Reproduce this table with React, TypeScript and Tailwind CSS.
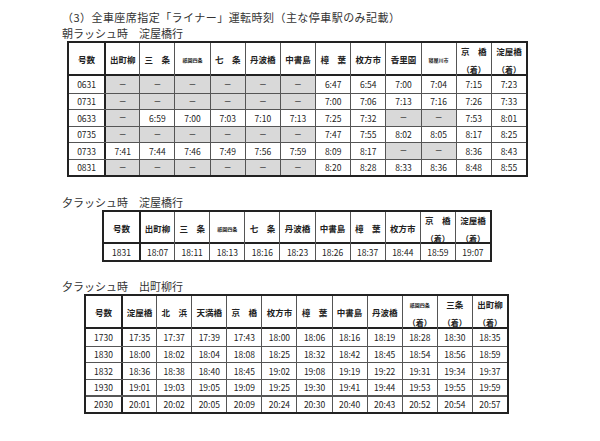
import React from "react";

type H = { t: string; tiny?: boolean; arr?: boolean };

const h = (t: string, tiny = false, arr = false): H => ({ t, tiny, arr });

function HeaderCell({ hd, idx }: { hd: H; idx: number }) {
  const border =
    idx === 0 ? "" : idx === 1 ? "border-l-2 border-[#222]" : "border-l border-[#555]";
  return (
    <div
      className={`${border} flex flex-col items-center h-full ${
        hd.arr ? "justify-start pt-[2px] gap-[5px]" : "justify-center"
      }`}
    >
      <span
        className={
          hd.tiny
            ? "text-[5px] leading-[13px] font-bold whitespace-nowrap"
            : "text-[8.5px] leading-[13px] font-bold whitespace-nowrap"
        }
      >
        {hd.t}
      </span>
      {hd.arr && <span className="text-[8px] leading-[13px] font-bold">（着）</span>}
    </div>
  );
}

function DataCell({ v, idx }: { v: string; idx: number }) {
  const border =
    idx === 0 ? "" : idx === 1 ? "border-l-2 border-[#222]" : "border-l border-[#555]";
  const dash = v === "—";
  return (
    <div
      className={`${border} flex items-center justify-center h-full ${
        dash ? "bg-[#d9d9d9]" : "bg-white"
      }`}
    >
      <span className={dash ? "text-[7px] leading-none font-bold text-[#333]" : "text-[8.5px] leading-none"}>
        {v}
      </span>
    </div>
  );
}

function TimeTable({
  width,
  grid,
  headers,
  rows,
  headerH,
  rowH,
  lastThick,
}: {
  width: string;
  grid: string;
  headers: H[];
  rows: string[][];
  headerH: string;
  rowH: string;
  lastThick?: boolean;
}) {
  return (
    <div className={`${width} border-2 border-[#222] bg-white text-[#222]`}>
      <div className={`grid ${grid} ${headerH} border-b-2 border-[#222]`}>
        {headers.map((hd, i) => (
          <HeaderCell key={i} hd={hd} idx={i} />
        ))}
      </div>
      {rows.map((r, ri) => (
        <div
          key={ri}
          className={`grid ${grid} ${rowH} ${
            ri === 0
              ? ""
              : lastThick && ri === rows.length - 1
              ? "border-t-2 border-[#555]"
              : "border-t border-[#555]"
          }`}
        >
          {r.map((v, i) => (
            <DataCell key={i} v={v} idx={i} />
          ))}
        </div>
      ))}
    </div>
  );
}

const D = "—";

const t1Headers: H[] = [
  h("号数"),
  h("出町柳"),
  h("三　条"),
  h("祇園四条", true),
  h("七　条"),
  h("丹波橋"),
  h("中書島"),
  h("樟　葉"),
  h("枚方市"),
  h("香里園"),
  h("寝屋川市", true),
  h("京　橋", false, true),
  h("淀屋橋", false, true),
];

const t1Rows: string[][] = [
  ["0631", D, D, D, D, D, D, "6:47", "6:54", "7:00", "7:04", "7:15", "7:23"],
  ["0731", D, D, D, D, D, D, "7:00", "7:06", "7:13", "7:16", "7:26", "7:33"],
  ["0633", D, "6:59", "7:00", "7:03", "7:10", "7:13", "7:25", "7:32", D, D, "7:53", "8:01"],
  ["0735", D, D, D, D, D, D, "7:47", "7:55", "8:02", "8:05", "8:17", "8:25"],
  ["0733", "7:41", "7:44", "7:46", "7:49", "7:56", "7:59", "8:09", "8:17", D, D, "8:36", "8:43"],
  ["0831", D, D, D, D, D, D, "8:20", "8:28", "8:33", "8:36", "8:48", "8:55"],
];

const t2Headers: H[] = [
  h("号数"),
  h("出町柳"),
  h("三　条"),
  h("祇園四条", true),
  h("七　条"),
  h("丹波橋"),
  h("中書島"),
  h("樟　葉"),
  h("枚方市"),
  h("京　橋", false, true),
  h("淀屋橋", false, true),
];

const t2Rows: string[][] = [
  ["1831", "18:07", "18:11", "18:13", "18:16", "18:23", "18:26", "18:37", "18:44", "18:59", "19:07"],
];

const t3Headers: H[] = [
  h("号数"),
  h("淀屋橋"),
  h("北　浜"),
  h("天満橋"),
  h("京　橋"),
  h("枚方市"),
  h("樟　葉"),
  h("中書島"),
  h("丹波橋"),
  h("祇園四条", true, true),
  h("三条", false, true),
  h("出町柳", false, true),
];

const t3Rows: string[][] = [
  ["1730", "17:35", "17:37", "17:39", "17:43", "18:00", "18:06", "18:16", "18:19", "18:28", "18:30", "18:35"],
  ["1830", "18:00", "18:02", "18:04", "18:08", "18:25", "18:32", "18:42", "18:45", "18:54", "18:56", "18:59"],
  ["1832", "18:36", "18:38", "18:40", "18:45", "19:02", "19:08", "19:19", "19:22", "19:31", "19:34", "19:37"],
  ["1930", "19:01", "19:03", "19:05", "19:09", "19:25", "19:30", "19:41", "19:44", "19:53", "19:55", "19:59"],
  ["2030", "20:01", "20:02", "20:05", "20:09", "20:24", "20:30", "20:40", "20:43", "20:52", "20:54", "20:57"],
];

export default function App() {
  return (
    <div className="w-[600px] h-[441px] bg-white overflow-hidden font-['Noto_Sans_CJK_JP',sans-serif] flex flex-col pt-[9px]">
      <div className="pl-[62px] text-[11px] leading-[16px] text-[#333] tracking-[0.45px] whitespace-nowrap">
        （3）全車座席指定「ライナー」運転時刻（主な停車駅のみ記載）
      </div>
      <div className="pl-[62px] text-[11px] leading-[16px] text-[#333] whitespace-nowrap">
        朝ラッシュ時　淀屋橋行
      </div>
      <div className="ml-[67px]">
        <TimeTable
          width="w-[461px]"
          grid="grid-cols-[repeat(13,minmax(0,1fr))]"
          headers={t1Headers}
          rows={t1Rows}
          headerH="h-[33px]"
          rowH="h-[16.5px]"
        />
      </div>
      <div className="pl-[62px] mt-[17px] text-[11px] leading-[16px] text-[#333] whitespace-nowrap">
        夕ラッシュ時　淀屋橋行
      </div>
      <div className="ml-[102px]">
        <TimeTable
          width="w-[390px]"
          grid="grid-cols-[repeat(11,minmax(0,1fr))]"
          headers={t2Headers}
          rows={t2Rows}
          headerH="h-[32px]"
          rowH="h-[16px]"
        />
      </div>
      <div className="pl-[62px] mt-[16px] text-[11px] leading-[16px] text-[#333] whitespace-nowrap">
        夕ラッシュ時　出町柳行
      </div>
      <div className="ml-[84px]">
        <TimeTable
          width="w-[425px]"
          grid="grid-cols-[repeat(12,minmax(0,1fr))]"
          headers={t3Headers}
          rows={t3Rows}
          headerH="h-[33px]"
          rowH="h-[16.6px]"
          lastThick
        />
      </div>
    </div>
  );
}
